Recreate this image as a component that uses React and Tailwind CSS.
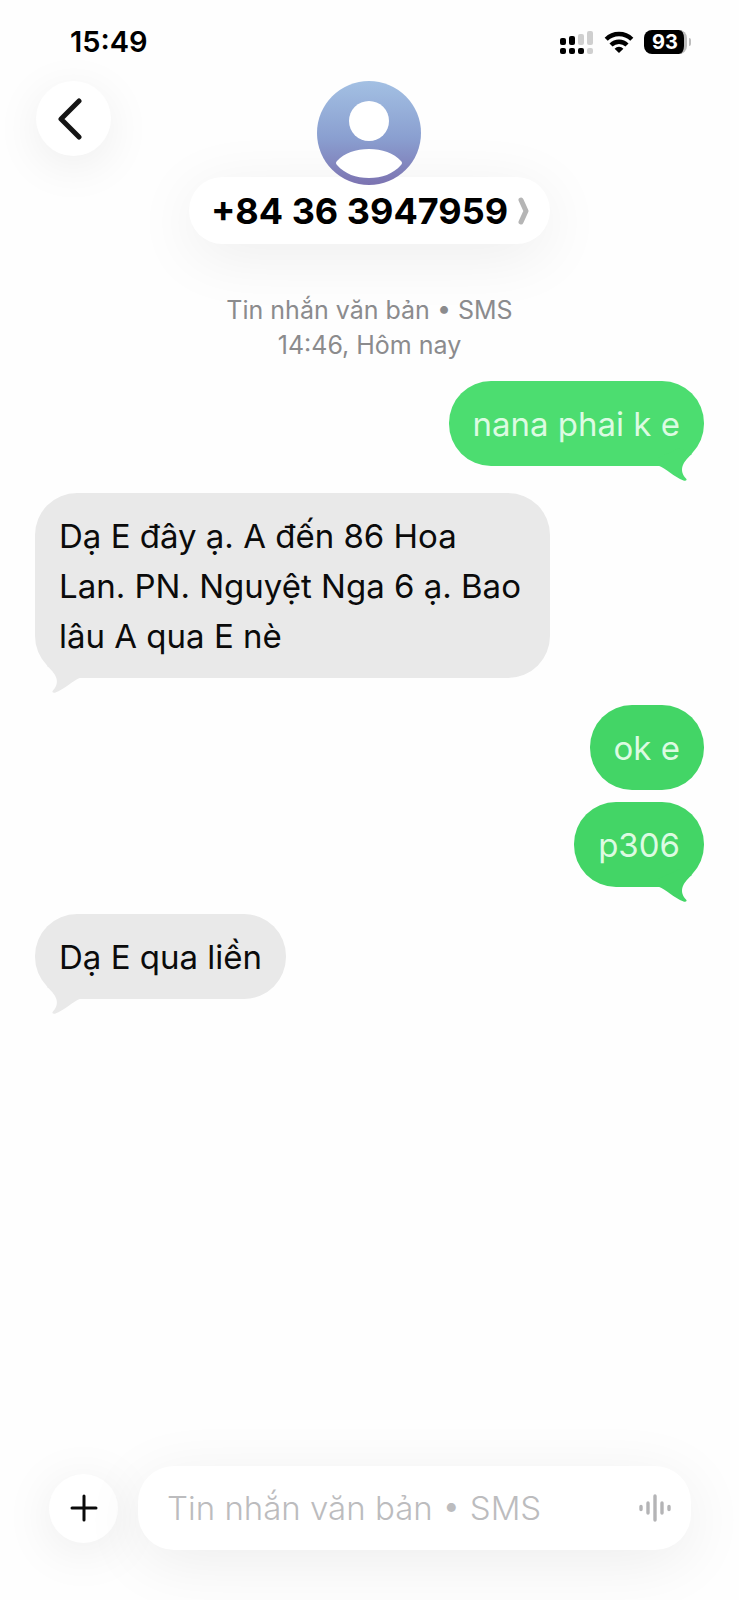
import clsx from 'clsx';

const MESSAGES = [
  { id: 1, from: 'me', text: 'nana phai k e', tail: true, light: true },
  { id: 2, from: 'them', text: 'Dạ E đây ạ. A đến 86 Hoa Lan. PN. Nguyệt Nga 6 ạ. Bao lâu A qua E nè', tail: true },
  { id: 3, from: 'me', text: 'ok e' },
  { id: 4, from: 'me', text: 'p306', tail: true, grouped: true },
  { id: 5, from: 'them', text: 'Dạ E qua liền', tail: true }
];

const SignalIcon = () => (
  <svg viewBox="0 0 34 24" className="w-[34px] h-6" aria-hidden="true">
    <g fill="#000">
      <rect x="0" y="8" width="6" height="7" rx="2" />
      <rect x="9" y="6" width="6" height="9" rx="2" />
      <rect x="0" y="18" width="6" height="6" rx="2" />
      <rect x="9" y="18" width="6" height="6" rx="2" />
      <rect x="18" y="18" width="6" height="6" rx="2" />
    </g>
    <g fill="#cfcfcf">
      <rect x="18" y="4" width="6" height="11" rx="2" />
      <rect x="27" y="1" width="6" height="14" rx="2" />
      <rect x="27" y="18" width="6" height="6" rx="2" />
    </g>
  </svg>
);

const WifiIcon = () => (
  <svg viewBox="0 0 30 24" className="w-[30px] h-6" fill="none" stroke="#000" strokeWidth="4.4" aria-hidden="true">
    <path d="M2.2 9.2a18.2 18.2 0 0 1 25.6 0" />
    <path d="M7 15a11.4 11.4 0 0 1 16 0" />
    <path d="M15 23l-4.4-4.300a6.2 6.2 0 0 1 8.800 0z" fill="#000" stroke="none" />
  </svg>
);

const Battery = () => (
  <div className="flex items-center gap-0.5">
    <div className="flex w-[43px] h-6 items-center justify-center rounded-lg border-r-3 border-[#bdbdbd] bg-black pl-0.5 text-xl font-bold leading-6 text-white">
      93
    </div>
    <div className="w-0.5 h-2 rounded-r-full bg-[#bdbdbd]"></div>
  </div>
);

const Avatar = () => (
  <svg viewBox="0 0 104 104" className="size-[104px]" role="img" aria-label="Contact">
    <defs>
      <linearGradient id="avatar-bg" x1="0" y1="0" x2="0" y2="1">
        <stop offset="0" stopColor="#a3c0e3" />
        <stop offset="0.55" stopColor="#8a9fd0" />
        <stop offset="1" stopColor="#7c73b1" />
      </linearGradient>
    </defs>
    <circle cx="52" cy="52" r="52" fill="url(#avatar-bg)" />
    <circle cx="52" cy="40" r="20" fill="#fff" />
    <path d="M20 80C27 72 39 68 52 68S77 72 84 80Q86 82 84 84C76 93 65 97 52 97S28 93 20 84Q18 82 20 80Z" fill="#fff" />
  </svg>
);

const WaveIcon = () => (
  <svg viewBox="0 0 32 28" className="w-8 h-7" stroke="#b4b4b6" strokeWidth="3.4" strokeLinecap="round" aria-hidden="true">
    <path d="M2 12.500v3M9 9v10M16 2v24M23 9v10M30 12.500v3" />
  </svg>
);

const Tail = ({ mine, className }) => (
  <svg
    viewBox="0 0 48 36"
    fill="currentColor"
    className={clsx('absolute -bottom-4 w-12 h-9', mine ? 'right-0' : 'left-0 -scale-x-100', className)}
    aria-hidden="true"
  >
    <path d="M2 19.500C10 22 18 31 27.500 34.500C30 35.500 31.500 34 30 32.500C24 26 24 18 36 8L24 2L2 12Z" />
  </svg>
);

const Bubble = ({ message }) => {
  const mine = message.from === 'me';
  const green = message.light ? 'bg-[#4cdd70]' : 'bg-[#43d566]';
  const tailGreen = message.light ? 'text-[#4cdd70]' : 'text-[#43d566]';

  return (
    <li className={clsx('flex', mine ? 'justify-end' : 'justify-start', message.grouped ? 'mt-3' : 'mt-[27px] first:mt-0')}>
      <div
        className={clsx(
          'relative max-w-[77%] rounded-[42px] px-6 pt-[18px] pb-[17px] text-[33px] leading-[50px]',
          mine ? green : 'bg-[#e9e9e9]'
        )}
      >
        {message.tail && <Tail mine={mine} className={mine ? tailGreen : 'text-[#e9e9e9]'} />}
        <p className={clsx('relative', mine ? 'text-[#dcfbe2]' : 'text-[#0b0b0b]')}>{message.text}</p>
      </div>
    </li>
  );
};

const App = () => {
  return (
    <div className="flex min-h-screen flex-col overflow-hidden bg-[#fefefe] font-['Inter','Liberation_Sans',sans-serif] text-black">
      {/* Status bar */}
      <div className="flex h-[81px] items-center justify-between pl-[70px] pr-12 pt-0.5">
        <time className="text-[29px] font-semibold leading-8">15:49</time>
        <div className="flex items-center gap-2.5">
          <SignalIcon />
          <WifiIcon />
          <Battery />
        </div>
      </div>

      {/* Header */}
      <header className="grid grid-cols-[1fr_auto_1fr] items-start px-9">
        <button
          type="button"
          aria-label="Back"
          className="flex size-[75px] items-center justify-center rounded-full bg-white shadow-[0_10px_48px_rgba(0,0,0,0.07)]"
        >
          <svg viewBox="0 0 24 42" className="mr-2 w-6 h-[42px]" fill="none" stroke="#151515" strokeWidth="5" strokeLinecap="round" strokeLinejoin="round">
            <path d="M21 3L3 21l18 18" />
          </svg>
        </button>
        <div className="flex flex-col items-center">
          <div className="relative -mb-2">
            <Avatar />
          </div>
          <button
            type="button"
            className="flex h-[67px] items-center gap-2.5 rounded-full bg-white pl-[22px] pr-5 shadow-[0_12px_64px_rgba(0,0,0,0.07)]"
          >
            <span className="text-[36px] font-bold leading-10">+84 36 3947959</span>
            <svg viewBox="0 0 12 28" className="w-3 h-7" fill="none" stroke="#b5b5b5" strokeWidth="5" strokeLinecap="round" strokeLinejoin="round">
              <path d="M3 3l5 11l-5 11" />
            </svg>
          </button>
        </div>
      </header>

      {/* Conversation */}
      <main className="flex-1 px-[35px]">
        <div className="pt-[49px] text-center text-[25px] leading-[35px] text-[#8b8b8d]">
          <p>Tin nhắn văn bản • SMS</p>
          <p>14:46, Hôm nay</p>
        </div>
        <ul className="mt-[18px]">
          {MESSAGES.map(message => (
            <Bubble key={message.id} message={message} />
          ))}
        </ul>
      </main>

      {/* Composer */}
      <form className="flex items-center gap-5 pb-[50px] pl-[49px] pr-12" onSubmit={e => e.preventDefault()}>
        <button
          type="button"
          aria-label="Add attachment"
          className="flex size-[69px] shrink-0 items-center justify-center rounded-full bg-white shadow-[0_8px_52px_rgba(0,0,0,0.08)]"
        >
          <svg viewBox="0 0 28 28" className="size-7" stroke="#0a0a0a" strokeWidth="3" strokeLinecap="round">
            <path d="M14 2v24M2 14h24" />
          </svg>
        </button>
        <div className="flex h-[84px] min-w-0 flex-1 items-center rounded-[36px] bg-white pl-[29px] pr-5 shadow-[0_12px_64px_rgba(0,0,0,0.07)]">
          <input
            type="text"
            aria-label="Tin nhắn văn bản"
            placeholder="Tin nhắn văn bản • SMS"
            className="min-w-0 flex-1 bg-transparent text-[33px] font-light leading-[50px] outline-none placeholder:text-[#bcbcbe]"
          />
          <button type="button" aria-label="Dictate">
            <WaveIcon />
          </button>
        </div>
      </form>
    </div>
  );
};

export default App;
